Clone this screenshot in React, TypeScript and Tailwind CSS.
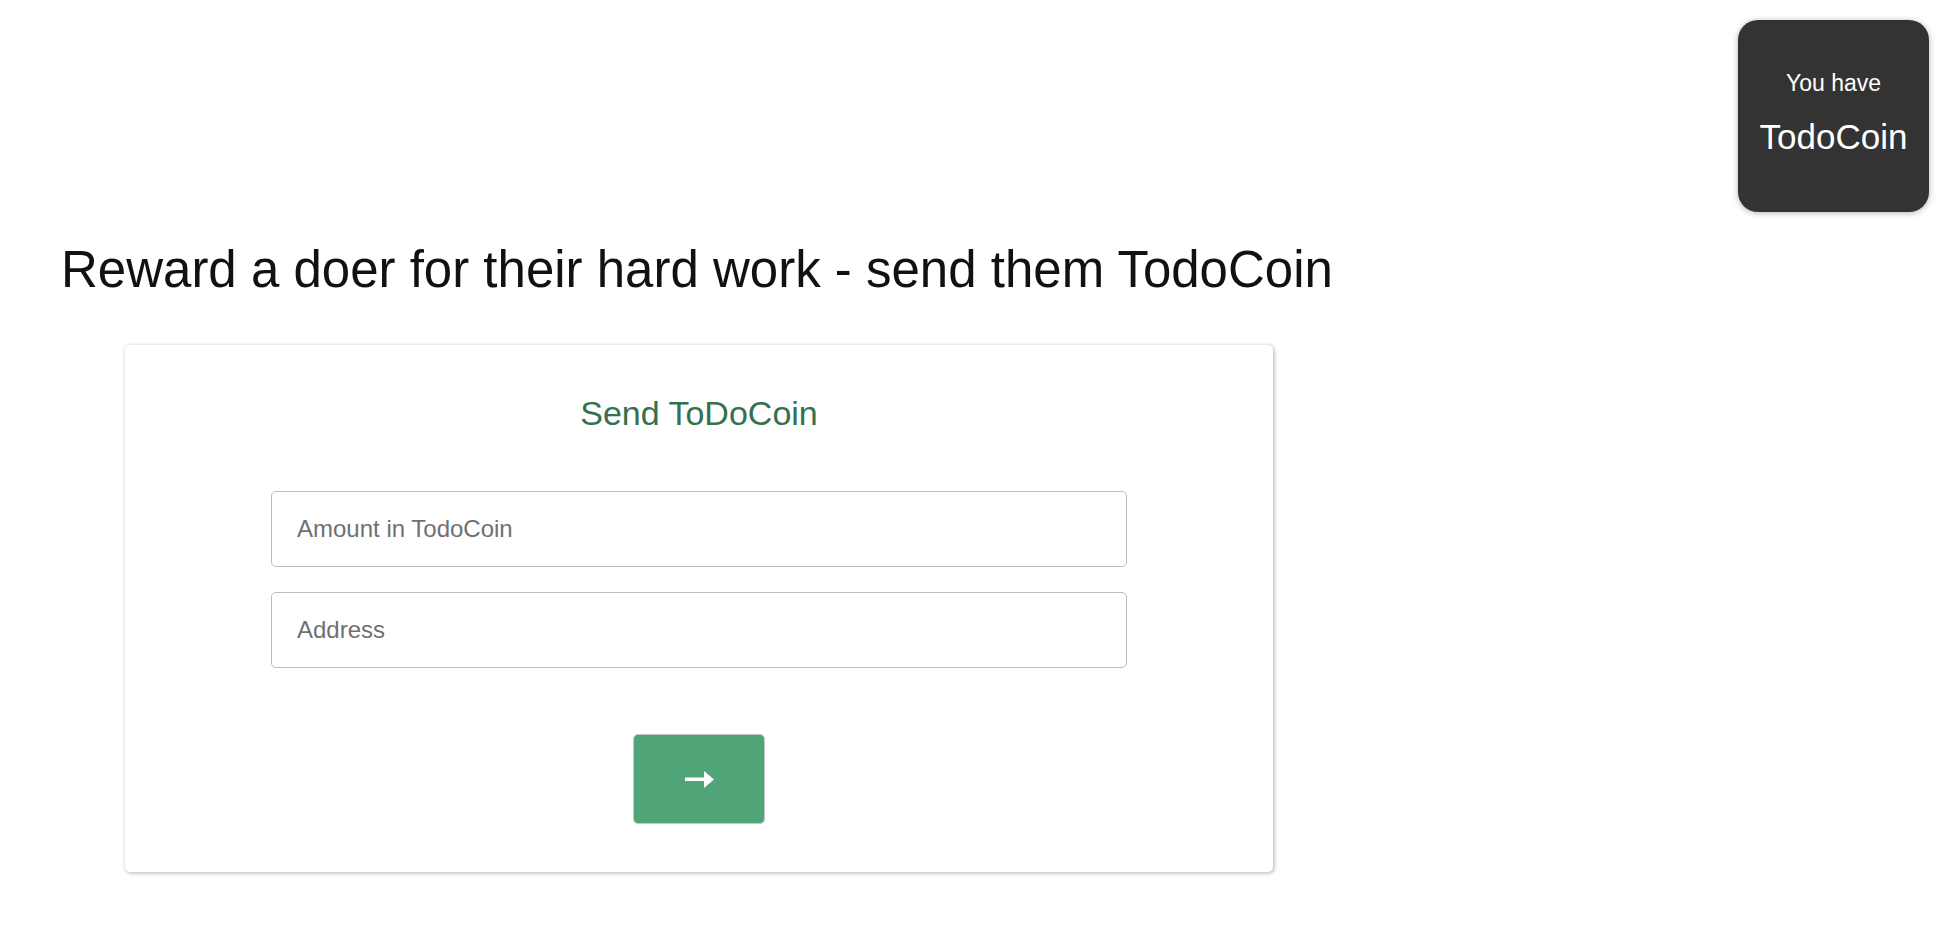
import React from "react";

export default function App() {
  return (
    <div className="min-h-[933px] w-full bg-white font-['Liberation_Sans',Arial,sans-serif]">
      <div className="flex justify-end pt-[20px] pr-[21px]">
        <div className="flex h-[192px] w-[191px] flex-col items-center rounded-[20px] bg-[#333333] pt-[48px] text-white shadow-[0_1px_6px_rgba(0,0,0,0.3)]">
          <div className="text-[23px] leading-[30px]">You have</div>
          <div className="mt-[19px] text-[35px] leading-[40px]">TodoCoin</div>
        </div>
      </div>
      <h1 className="mt-[28px] pl-[61px] text-[51px] leading-[60px] font-normal text-[#111111]">
        Reward a doer for their hard work - send them TodoCoin
      </h1>
      <div className="mt-[45px] ml-[125px] flex w-[1148px] flex-col items-center rounded-[5px] bg-white pt-[48px] pb-[48px] shadow-[1px_1px_4px_rgba(0,0,0,0.32)]">
        <h2 className="text-[34px] leading-[40px] font-normal text-[#33714f]">Send ToDoCoin</h2>
        <input
          className="mt-[58px] h-[76px] w-[856px] rounded-[5px] border border-[#bdbdbd] px-[25px] text-[24px] text-[#333] outline-none placeholder:text-[#707070]"
          placeholder="Amount in TodoCoin"
        />
        <input
          className="mt-[25px] h-[76px] w-[856px] rounded-[5px] border border-[#bdbdbd] px-[25px] text-[24px] text-[#333] outline-none placeholder:text-[#707070]"
          placeholder="Address"
        />
        <button className="mt-[66px] flex h-[90px] w-[132px] items-center justify-center rounded-[5px] border border-[#c8c8c8] bg-[#4fa577]">
          <svg width="29" height="17" viewBox="0 0 29 17" fill="white">
            <rect x="0" y="6.5" width="21" height="3.5" />
            <polygon points="19,0 29,8.5 19,17" />
          </svg>
        </button>
      </div>
    </div>
  );
}
